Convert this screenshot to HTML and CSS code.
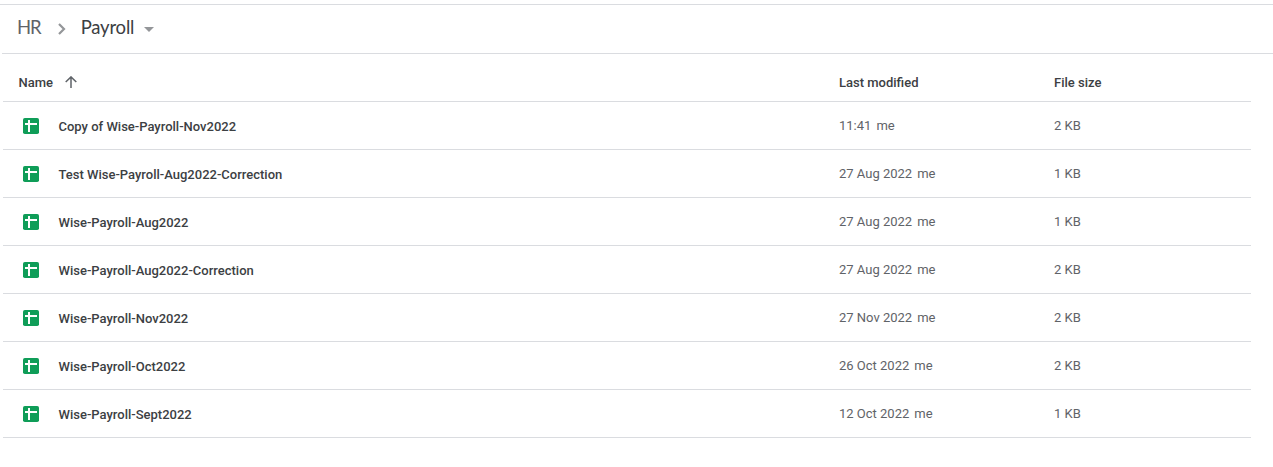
FILE: index.html
```html
<!DOCTYPE html>
<html lang="en">
<head>
<meta charset="utf-8">
<title>Payroll</title>
<link rel="stylesheet" href="styles.css">
</head>
<body>
<svg class="defs" width="0" height="0"><symbol id="sheet" viewBox="0 0 16 16"><rect width="16" height="16" rx="1.8" fill="#0f9d58"/><path d="M2 6h12M6 2v12" stroke="#fff" stroke-width="2"/></symbol></svg>
<nav class="crumbs">
<span class="crumb parent">HR</span>
<svg class="chevron" width="10" height="14" viewBox="0 0 10 14"><path d="M2 2l5 5-5 5" fill="none" stroke="#949699" stroke-width="2.2"/></svg>
<span class="crumb current">Payroll</span>
<svg class="caret" width="10" height="5" viewBox="0 0 10 5"><path d="M0 0h10L5 5z" fill="#949699"/></svg>
</nav>
<main class="list">
<div class="row head"><div class="name"><span>Name</span><svg class="arrow" width="12" height="12" viewBox="0 0 12 12"><path d="M6 12V1M.7 6L6 .9 11.3 6" fill="none" stroke="#5f6368" stroke-width="1.5"/></svg></div><div class="modified">Last modified</div><div class="size">File size</div></div>
<div class="row"><div class="name"><svg class="icon"><use href="#sheet"/></svg><span>Copy of Wise-Payroll-Nov2022</span></div><div class="modified"><span>11:41</span><span>me</span></div><div class="size">2 KB</div></div>
<div class="row"><div class="name"><svg class="icon"><use href="#sheet"/></svg><span>Test Wise-Payroll-Aug2022-Correction</span></div><div class="modified"><span>27 Aug 2022</span><span>me</span></div><div class="size">1 KB</div></div>
<div class="row"><div class="name"><svg class="icon"><use href="#sheet"/></svg><span>Wise-Payroll-Aug2022</span></div><div class="modified"><span>27 Aug 2022</span><span>me</span></div><div class="size">1 KB</div></div>
<div class="row"><div class="name"><svg class="icon"><use href="#sheet"/></svg><span>Wise-Payroll-Aug2022-Correction</span></div><div class="modified"><span>27 Aug 2022</span><span>me</span></div><div class="size">2 KB</div></div>
<div class="row"><div class="name"><svg class="icon"><use href="#sheet"/></svg><span>Wise-Payroll-Nov2022</span></div><div class="modified"><span>27 Nov 2022</span><span>me</span></div><div class="size">2 KB</div></div>
<div class="row"><div class="name"><svg class="icon"><use href="#sheet"/></svg><span>Wise-Payroll-Oct2022</span></div><div class="modified"><span>26 Oct 2022</span><span>me</span></div><div class="size">2 KB</div></div>
<div class="row"><div class="name"><svg class="icon"><use href="#sheet"/></svg><span>Wise-Payroll-Sept2022</span></div><div class="modified"><span>12 Oct 2022</span><span>me</span></div><div class="size">1 KB</div></div>
</main>
</body>
</html>
```
FILE: styles.css
```css
* { box-sizing: border-box; }
html { padding-top: 4px; }
body { margin: 0; border-top: 1px solid #dadce0; background: #fff; font-family: Roboto, sans-serif; font-size: 13px; color: #5f6368; }
.defs { display: none; }
.crumbs { display: flex; align-items: center; height: 49px; margin-left: 2px; padding: 0 0 0 15px; border-bottom: 1px solid #dadce0; }
.crumb { padding-bottom: 4px; font-family: Lato, sans-serif; font-size: 18.5px; line-height: 24px; letter-spacing: -.2px; }
.parent { letter-spacing: -1px; }
.current { color: #3c4043; }
.chevron { margin: 0 14px 0 16px; }
.caret { margin: 1px 0 0 9.5px; }
.list { width: 1247.5px; margin-left: 3px; }
.row { display: grid; grid-template-columns: 836px 215px 1fr; align-items: center; height: 48px; border-bottom: 1px solid #dadce0; }
.name { display: flex; align-items: center; padding-left: 20px; color: #3c4043; font-weight: 500; }
.icon { width: 16px; height: 16px; margin-right: 19.5px; }
.icon + span { padding-top: 2px; }
.modified { display: flex; gap: 5px; }
.head { color: #3c4043; font-weight: 500; padding-top: 10px; }
.head .name { padding-left: 15.5px; }
.arrow { margin: -2px 0 0 11.5px; }
```
